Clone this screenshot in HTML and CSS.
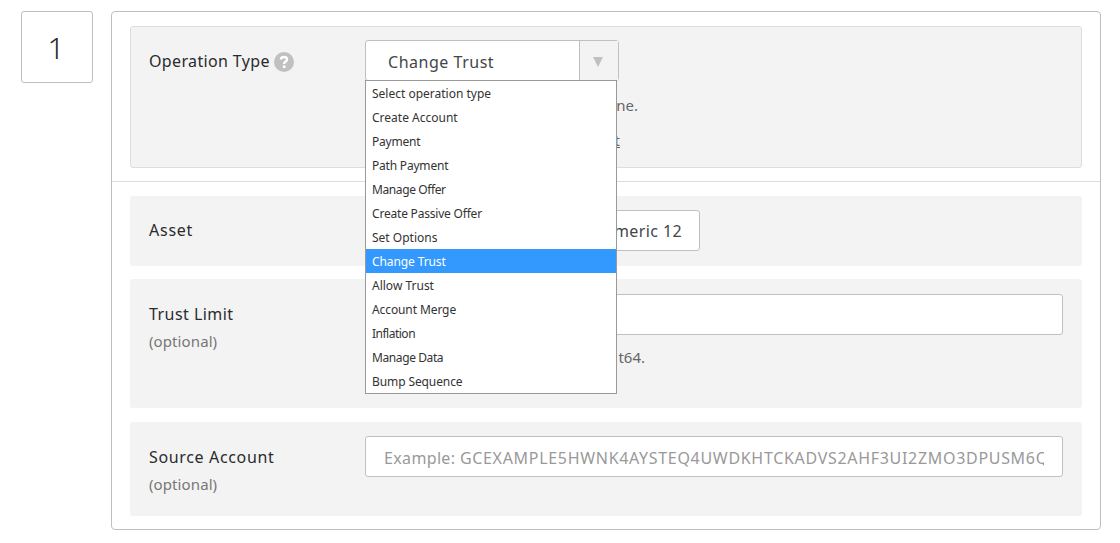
FILE: index.html
```html
<!DOCTYPE html>
<html lang="en">
<head>
<meta charset="utf-8">
<title>Operation builder</title>
<link rel="stylesheet" href="styles.css">
</head>
<body>
<main class="operation">
  <div class="number">1</div>
  <section class="panel">
    <div class="type-section">
      <div class="row row-type">
        <div class="label"><span class="t-type">Operation Type</span>
          <svg class="help" viewBox="0 0 20 20" width="20" height="20"><circle cx="10" cy="10" r="10" fill="#bfc0c2"/><path d="M6.9 7.5C7.1 5.9 8.2 5.1 10 5.1c1.8 0 3 .9 3 2.3 0 1.2-.7 1.7-1.6 2.3-.9.6-1.3 1-1.3 2.4" fill="none" stroke="#fff" stroke-width="2.5"/><rect x="8.8" y="13.4" width="2.7" height="2.7" fill="#fff"/></svg>
        </div>
        <div class="field">
          <div class="select">
            <span class="value">Change Trust</span>
            <span class="arrow"><svg width="10" height="10" viewBox="0 0 10 10"><path d="M0 0h10L5 10z" fill="#bfc0c2"/></svg></span>
            <ul class="menu">
              <li class="m1">Select operation type</li>
              <li class="m2">Create Account</li>
              <li class="m3">Payment</li>
              <li class="m4">Path Payment</li>
              <li class="m5">Manage Offer</li>
              <li class="m6">Create Passive Offer</li>
              <li class="m7">Set Options</li>
              <li class="m8 active">Change Trust</li>
              <li class="m9">Allow Trust</li>
              <li class="m10">Account Merge</li>
              <li class="m11">Inflation</li>
              <li class="m12">Manage Data</li>
              <li class="m13">Bump Sequence</li>
            </ul>
          </div>
          <p class="hint hint-type">ne.</p>
          <p class="hint hint-doc"><a>t</a></p>
        </div>
      </div>
    </div>
    <div class="fields">
      <div class="row row-asset">
        <div class="label"><span class="t-asset">Asset</span></div>
        <div class="field">
          <div class="choices"><span class="last">meric 12</span></div>
        </div>
      </div>
      <div class="row row-limit">
        <div class="label"><span class="t-limit">Trust Limit</span><div class="optional">(optional)</div></div>
        <div class="field">
          <div class="input"></div>
          <p class="hint hint-limit">t64.</p>
        </div>
      </div>
      <div class="row row-source">
        <div class="label"><span class="t-source">Source Account</span><div class="optional">(optional)</div></div>
        <div class="field">
          <div class="input"><span class="placeholder">Example: <span class="key">GCEXAMPLE5HWNK4AYSTEQ4UWDKHTCKADVS2AHF3UI2ZMO3DPUSM6Q</span></span></div>
        </div>
      </div>
    </div>
  </section>
</main>
</body>
</html>
```
FILE: styles.css
```css
* { box-sizing: border-box; }
body { margin: 0; background: #fff; color: #292b2e; font: 16px/24px "Noto Sans", sans-serif; }
.operation { display: flex; gap: 18px; padding: 11px 19px 13px 21px; height: 543px; align-items: flex-start; }
.number { width: 72px; height: 72px; border: 1px solid #bfc0c2; border-radius: 3px; font-size: 30px; font-weight: 300; line-height: 72px; padding-right: 2px; text-align: center; }
.panel { width: 990px; height: 519px; border: 1px solid #bfc0c2; border-radius: 4px; }
.type-section { height: 170px; padding: 14px 18px 0; border-bottom: 1px solid #dcdddd; }
.fields { padding: 14px 18px 0; }
.row { display: flex; background: #f3f3f3; border-radius: 3px; padding: 14px 19px; }
.row-type { height: 142px; border: 1px solid #dcdddd; padding: 13px 18px; }
.row-asset { height: 70px; margin-bottom: 13px; }
.row-limit { height: 129px; margin-bottom: 14px; padding-top: 15px; }
.row-source { height: 94px; }
.label { width: 216px; flex: none; padding-top: 9px; white-space: nowrap; }
.row-type .label { display: flex; gap: 4px; }
.row-asset .label, .row-limit .label { padding-top: 8px; }
.t-type { letter-spacing: .36px; }
.t-asset { letter-spacing: .75px; }
.t-limit { letter-spacing: .45px; }
.t-source { letter-spacing: .65px; }
.help { margin-top: 3px; }
.optional { color: #777; font-size: 15px; margin-top: 3px; letter-spacing: .1px; }
.field { width: 698px; }
.select { position: relative; display: flex; width: 254px; height: 41px; background: #fff; border: 1px solid #bfc0c2; border-radius: 3px; }
.value { flex: 1; padding-left: 22px; line-height: 42px; color: #444649; letter-spacing: .52px; }
.arrow { width: 39px; border-left: 1px solid #bfc0c2; background: #f3f3f3; padding: 16px 0 0 13px; line-height: 0; }
.menu { position: absolute; z-index: 2; left: -1px; top: 39px; width: 252px; height: 314px; margin: 0; padding: 0; list-style: none; background: #fff; border: 1px solid #999; }
.menu li { height: 24px; padding: 1px 0 0 6px; font-size: 12px; line-height: 24px; color: #333; white-space: nowrap; }
.menu .active { background: #3399ff; color: #fff; }
.m3, .m4, .m6 { letter-spacing: -.2px; }
.m5, .m12 { letter-spacing: -.4px; }
.m11 { letter-spacing: -.5px; }
.m8, .m10, .m13 { letter-spacing: -.1px; }
.hint { margin: 0; color: #666; font-size: 15px; line-height: 24px; text-align: right; white-space: nowrap; }
.hint-type { width: 273px; margin-top: 12px; }
.hint-doc { width: 255px; margin-top: 11px; }
.hint-doc a { text-decoration: underline; }
.hint-limit { width: 280px; margin-top: 10px; }
.choices { width: 335px; height: 41px; border: 1px solid #bfc0c2; border-radius: 3px; background: #fff; color: #444649; line-height: 40px; }
.choices .last { display: block; padding-right: 17px; text-align: right; letter-spacing: .4px; }
.input { height: 41px; padding: 0 18px; background: #fff; border: 1px solid #bfc0c2; border-radius: 3px; line-height: 42px; }
.placeholder { display: block; overflow: hidden; white-space: nowrap; color: #999; letter-spacing: .35px; }
.key { letter-spacing: .69px; }
```
